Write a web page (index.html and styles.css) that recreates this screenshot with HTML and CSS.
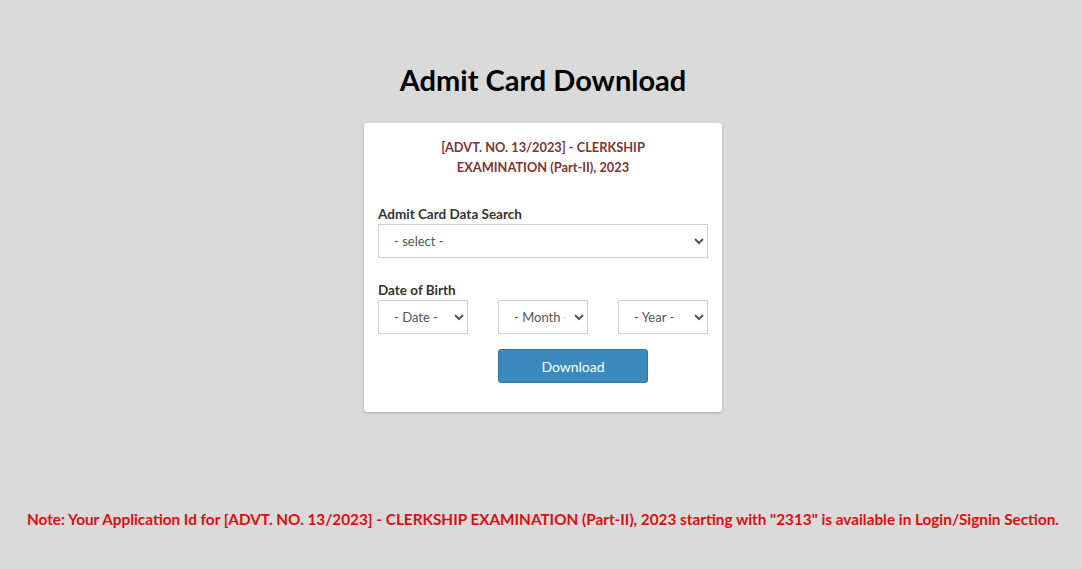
FILE: index.html
```html
<!DOCTYPE html>
<html>
<head>
<meta charset="utf-8">
<link rel="stylesheet" href="styles.css">
</head>
<body>
<main class="page">
  <h1 class="title">Admit Card Download</h1>
  <section class="card">
    <h2 class="exam">[ADVT. NO. 13/2023] - CLERKSHIP<br>EXAMINATION (Part-II), 2023</h2>
    <div class="field">
      <label class="label">Admit Card Data Search</label>
      <select class="control wide"><option>- select -</option></select>
    </div>
    <div class="field dob">
      <label class="label">Date of Birth</label>
      <div class="dob-row">
        <select class="control"><option>- Date -</option></select>
        <select class="control"><option>- Month -</option></select>
        <select class="control"><option>- Year -</option></select>
      </div>
    </div>
    <div class="actions">
      <button class="btn">Download</button>
    </div>
  </section>
  <p class="note">Note: Your Application Id for [ADVT. NO. 13/2023] - CLERKSHIP EXAMINATION (Part-II), 2023 starting with "2313" is available in Login/Signin Section.</p>
</main>
</body>
</html>
```
FILE: styles.css
```css
html, body {
  margin: 0;
  padding: 0;
  background: #dadada;
  font-family: "Lato", "Liberation Sans", sans-serif;
}
.page {
  display: flex;
  flex-direction: column;
  align-items: center;
  padding-top: 62px;
  padding-left: 4px;
}
.title {
  margin: 0;
  font-size: 29px;
  font-weight: 700;
  color: #000;
  line-height: 36px;
}
.card {
  margin-top: 25px;
  width: 330px;
  padding: 14px 14px 29px;
  background: #fff;
  border-radius: 3px;
  box-shadow: 0 1px 3px rgba(0,0,0,0.25);
}
.exam {
  margin: 0;
  text-align: center;
  font-size: 12.8px;
  line-height: 20px;
  font-weight: 700;
  color: #7b3535;
}
.field {
  margin-top: 28px;
  display: flex;
  flex-direction: column;
}
.field.dob {
  margin-top: 23px;
}
.label {
  font-size: 13.5px;
  font-weight: 700;
  color: #333;
  line-height: 18px;
  margin-bottom: 1px;
}
.control {
  height: 34px;
  border: 1px solid #cfcfcf;
  background: #fff;
  border-radius: 0;
  font-family: inherit;
  font-size: 13px;
  color: #555;
  padding: 0 6px 0 11px;
}
.dob-row {
  display: grid;
  grid-template-columns: repeat(3, 90px);
  column-gap: 30px;
}
.dob-row .control {
  width: 90px;
}
.actions {
  display: grid;
  grid-template-columns: repeat(3, 90px);
  column-gap: 30px;
  margin-top: 15px;
}
.btn {
  grid-column: 2 / span 2;
  width: 150px;
  height: 34px;
  background: #3a8abe;
  border: 1px solid #2e76a6;
  border-radius: 3px;
  color: #fff;
  font-family: inherit;
  font-size: 14px;
}
.note {
  margin: 98px 0 0;
  font-size: 15.3px;
  font-weight: 700;
  color: #e00d0d;
  white-space: nowrap;
}
```
